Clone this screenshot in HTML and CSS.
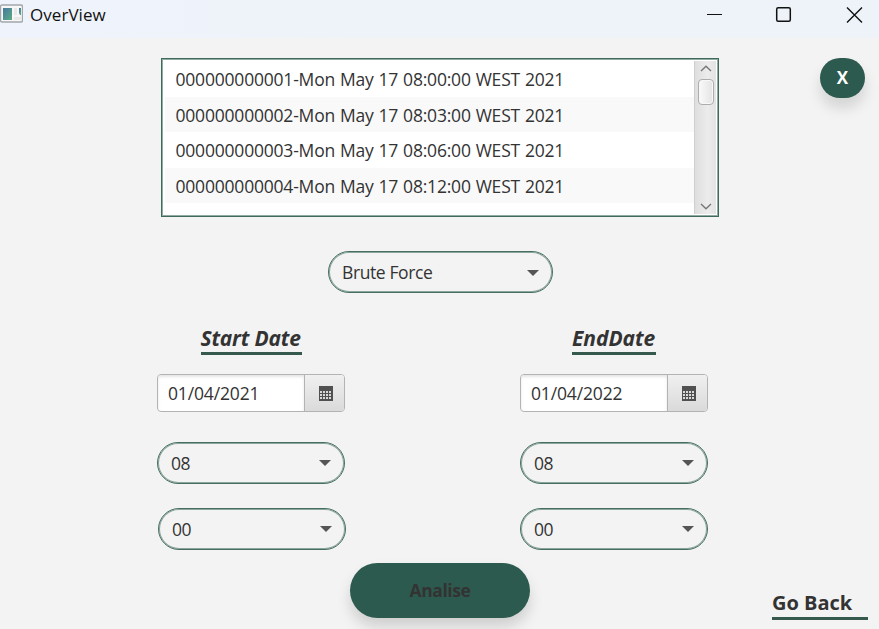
FILE: index.html
```html
<!DOCTYPE html>
<html lang="en">
<head>
<meta charset="utf-8">
<title>OverView</title>
<link rel="stylesheet" href="styles.css">
</head>
<body>
<svg width="0" height="0" class="defs">
  <symbol id="calendar" viewBox="0 0 14 15">
    <path fill="#505050" d="M0 0h14v15H0z"/>
    <path fill="#d8d8d8" d="M1 5h2v2H1zM4 5h2v2H4zM7 5h2v2H7zM10 5h2v2h-2zM1 8h2v2H1zM4 8h2v2H4zM7 8h2v2H7zM10 8h2v2h-2zM1 11h2v2H1zM4 11h2v2H4zM7 11h2v2H7zM10 11h2v2h-2z"/>
  </symbol>
</svg>
<header class="titlebar">
  <svg class="app-icon" width="23" height="20" viewBox="0 0 23 20">
    <defs><linearGradient id="g" x1="0" y1="0" x2="1" y2="1"><stop offset="0" stop-color="#4678a0"/><stop offset="1" stop-color="#5cac84"/></linearGradient></defs>
    <rect x=".5" y="1" width="22" height="17" rx="1.5" fill="#f7f7f7" stroke="#a2a8ab" stroke-width="1.4"/>
    <path d="M3 4h9v12H3z" fill="url(#g)"/>
    <path d="M14 4h3v7h-3zM14 13h7v3h-7z" fill="#e9e9e9"/>
    <path d="M19 4h2v7h-1l-1-2z" fill="url(#g)"/>
  </svg>
  <h1 class="title">OverView</h1>
  <svg class="window-controls" width="158" height="18" viewBox="0 0 158 18" fill="none" stroke="#111">
    <path d="M0 8.5h15"/>
    <rect x="69.7" y="1.7" width="13.6" height="13.6" rx="1.5" stroke-width="1.5"/>
    <path d="M140 1.5l15 15M155 1.5l-15 15" stroke-width="1.4"/>
  </svg>
</header>
<main class="content">
  <section class="top">
    <div class="list">
      <ul class="rows">
        <li>000000000001-Mon May 17 08:00:00 WEST 2021</li>
        <li>000000000002-Mon May 17 08:03:00 WEST 2021</li>
        <li>000000000003-Mon May 17 08:06:00 WEST 2021</li>
        <li>000000000004-Mon May 17 08:12:00 WEST 2021</li>
        <li></li>
      </ul>
      <div class="scrollbar">
        <svg width="12" height="7" viewBox="0 0 12 7"><path d="M1 6l5-4.7L11 6" fill="none" stroke="#777" stroke-width="1.4"/></svg>
        <div class="thumb"></div>
        <svg class="down" width="12" height="7" viewBox="0 0 12 7"><path d="M1 1l5 4.7L11 1" fill="none" stroke="#777" stroke-width="1.4"/></svg>
      </div>
    </div>
    <button class="close">X</button>
  </section>
  <div class="combo method"><span>Brute Force</span><i class="arrow"></i></div>
  <section class="ranges">
    <div class="range">
      <h2 class="start">Start Date</h2>
      <div class="date"><span>01/04/2021</span><b class="picker"><svg width="14" height="15"><use href="#calendar"/></svg></b></div>
      <div class="combo hour"><span>08</span><i class="arrow"></i></div>
      <div class="combo minute shifted"><span>00</span><i class="arrow"></i></div>
    </div>
    <div class="range">
      <h2 class="end">EndDate</h2>
      <div class="date"><span>01/04/2022</span><b class="picker"><svg width="14" height="15"><use href="#calendar"/></svg></b></div>
      <div class="combo hour"><span>08</span><i class="arrow"></i></div>
      <div class="combo minute"><span>00</span><i class="arrow"></i></div>
    </div>
  </section>
  <footer class="actions">
    <button class="analyse">Analise</button>
    <a class="back">Go Back</a>
  </footer>
</main>
</body>
</html>
```
FILE: styles.css
```css
* { box-sizing: border-box; }
body {
  margin: 0;
  width: 879px;
  height: 629px;
  overflow: hidden;
  background: #f3f3f3;
  color: #333;
  font: 17.5px/24px "Open Sans", "Noto Sans", sans-serif;
}
.defs { display: none; }
h1, h2, ul { margin: 0; padding: 0; }
button { border: 0; padding: 0; font: inherit; }

.titlebar {
  display: flex;
  align-items: flex-start;
  height: 38px;
  padding-top: 4px;
  background: linear-gradient(90deg, #eff3fb, #edf3f8);
}
.title {
  margin: -1px 0 0 7px;
  color: #111;
  font-size: 17px;
  font-weight: 400;
  letter-spacing: 0.05px;
}
.window-controls { margin: 2px 14px 0 auto; }

.content { display: flex; flex-direction: column; }
.top {
  display: flex;
  align-items: flex-start;
  justify-content: space-between;
  padding: 20px 14px 0 161px;
}
.list {
  display: flex;
  width: 558px;
  height: 159px;
  padding: 2px 2px 1px 3px;
  border: 1px solid #3f6b5e;
  box-shadow: inset 0 0 0 1px #91aaa2;
  background: #fff;
}
.rows {
  flex: 1;
  overflow: hidden;
  list-style: none;
}
.rows li {
  height: 35.6px;
  padding-left: 10.5px;
  line-height: 37px;
  letter-spacing: -0.2px;
  word-spacing: 0.6px;
  white-space: nowrap;
}
.rows li:nth-child(even) { background: #f9f9f9; }
.scrollbar {
  display: flex;
  flex-direction: column;
  align-items: center;
  width: 22px;
  height: 153px;
  padding: 4px 0;
  border-left: 1px solid #cfcfcf;
  background: linear-gradient(90deg, #dedede, #ececec 60%, #e3e3e3);
}
.thumb {
  width: 16px;
  height: 26px;
  margin-top: 7px;
  border: 1px solid #adadad;
  border-radius: 4px;
  background: linear-gradient(90deg, #fafafa, #e3e3e3);
  box-shadow: inset 0 0 0 1px #f8f8f8;
}
.down { margin-top: auto; }
.close {
  width: 45px;
  height: 40px;
  border-radius: 20px;
  background: #2d5a4e;
  box-shadow: 0 10px 14px rgba(0, 0, 0, 0.13);
  color: #fff;
  font-size: 17px;
  font-weight: 700;
}

.combo {
  display: flex;
  align-items: center;
  justify-content: space-between;
  width: 188px;
  height: 42px;
  padding: 0 13px;
  border: 1px solid #466f62;
  border-radius: 21px;
  box-shadow: inset 0 0 0 1px rgba(70, 111, 98, 0.6);
  letter-spacing: -0.4px;
}
.arrow {
  border: solid transparent;
  border-width: 6px 6px 0;
  border-top-color: #555;
}
.method {
  width: 225px;
  margin: 34px 0 0 328px;
  padding-top: 1px;
}
.method span { margin-top: -1px; }

.ranges {
  display: flex;
  gap: 175px;
  margin: 32px 0 0 157px;
}
.range {
  display: flex;
  flex-direction: column;
  width: 188px;
}
h2 {
  align-self: center;
  height: 30px;
  border-bottom: 3px solid #35594d;
  font-size: 21px;
  font-style: italic;
  line-height: 26px;
  white-space: nowrap;
}
.start { width: 101px; letter-spacing: -0.2px; }
.end { width: 84px; letter-spacing: -0.05px; }
.date {
  display: flex;
  height: 38px;
  margin-top: 19px;
  border: 1px solid #b3b3b3;
  border-radius: 4px;
  background: #fff;
  line-height: 37px;
  letter-spacing: -0.15px;
  overflow: hidden;
}
.date span { flex: 1; padding-left: 10px; box-shadow: inset 0 2px 3px #e5e5e5; }
.picker {
  display: flex;
  align-items: center;
  justify-content: center;
  width: 40px;
  padding-left: 2px;
  border-left: 1px solid #b3b3b3;
  background: linear-gradient(#f0f0f0, #dadada);
}
.hour { margin-top: 30px; }
.minute { margin-top: 24px; }
.shifted { margin-left: 1px; }

.actions {
  display: flex;
  align-items: flex-start;
  padding: 13px 11px 0 350px;
}
.analyse {
  width: 180px;
  height: 55px;
  padding-bottom: 1px;
  border-radius: 27.5px;
  background: #2d5a4e;
  box-shadow: 0 9px 14px rgba(0, 0, 0, 0.15);
  color: #333;
  font-size: 17.5px;
  font-weight: 700;
  letter-spacing: -0.4px;
}
.back {
  width: 96px;
  height: 30px;
  margin: 27px 0 0 auto;
  border-bottom: 3px solid #35594d;
  font-size: 20px;
  font-weight: 700;
  line-height: 26px;
  white-space: nowrap;
}
```
